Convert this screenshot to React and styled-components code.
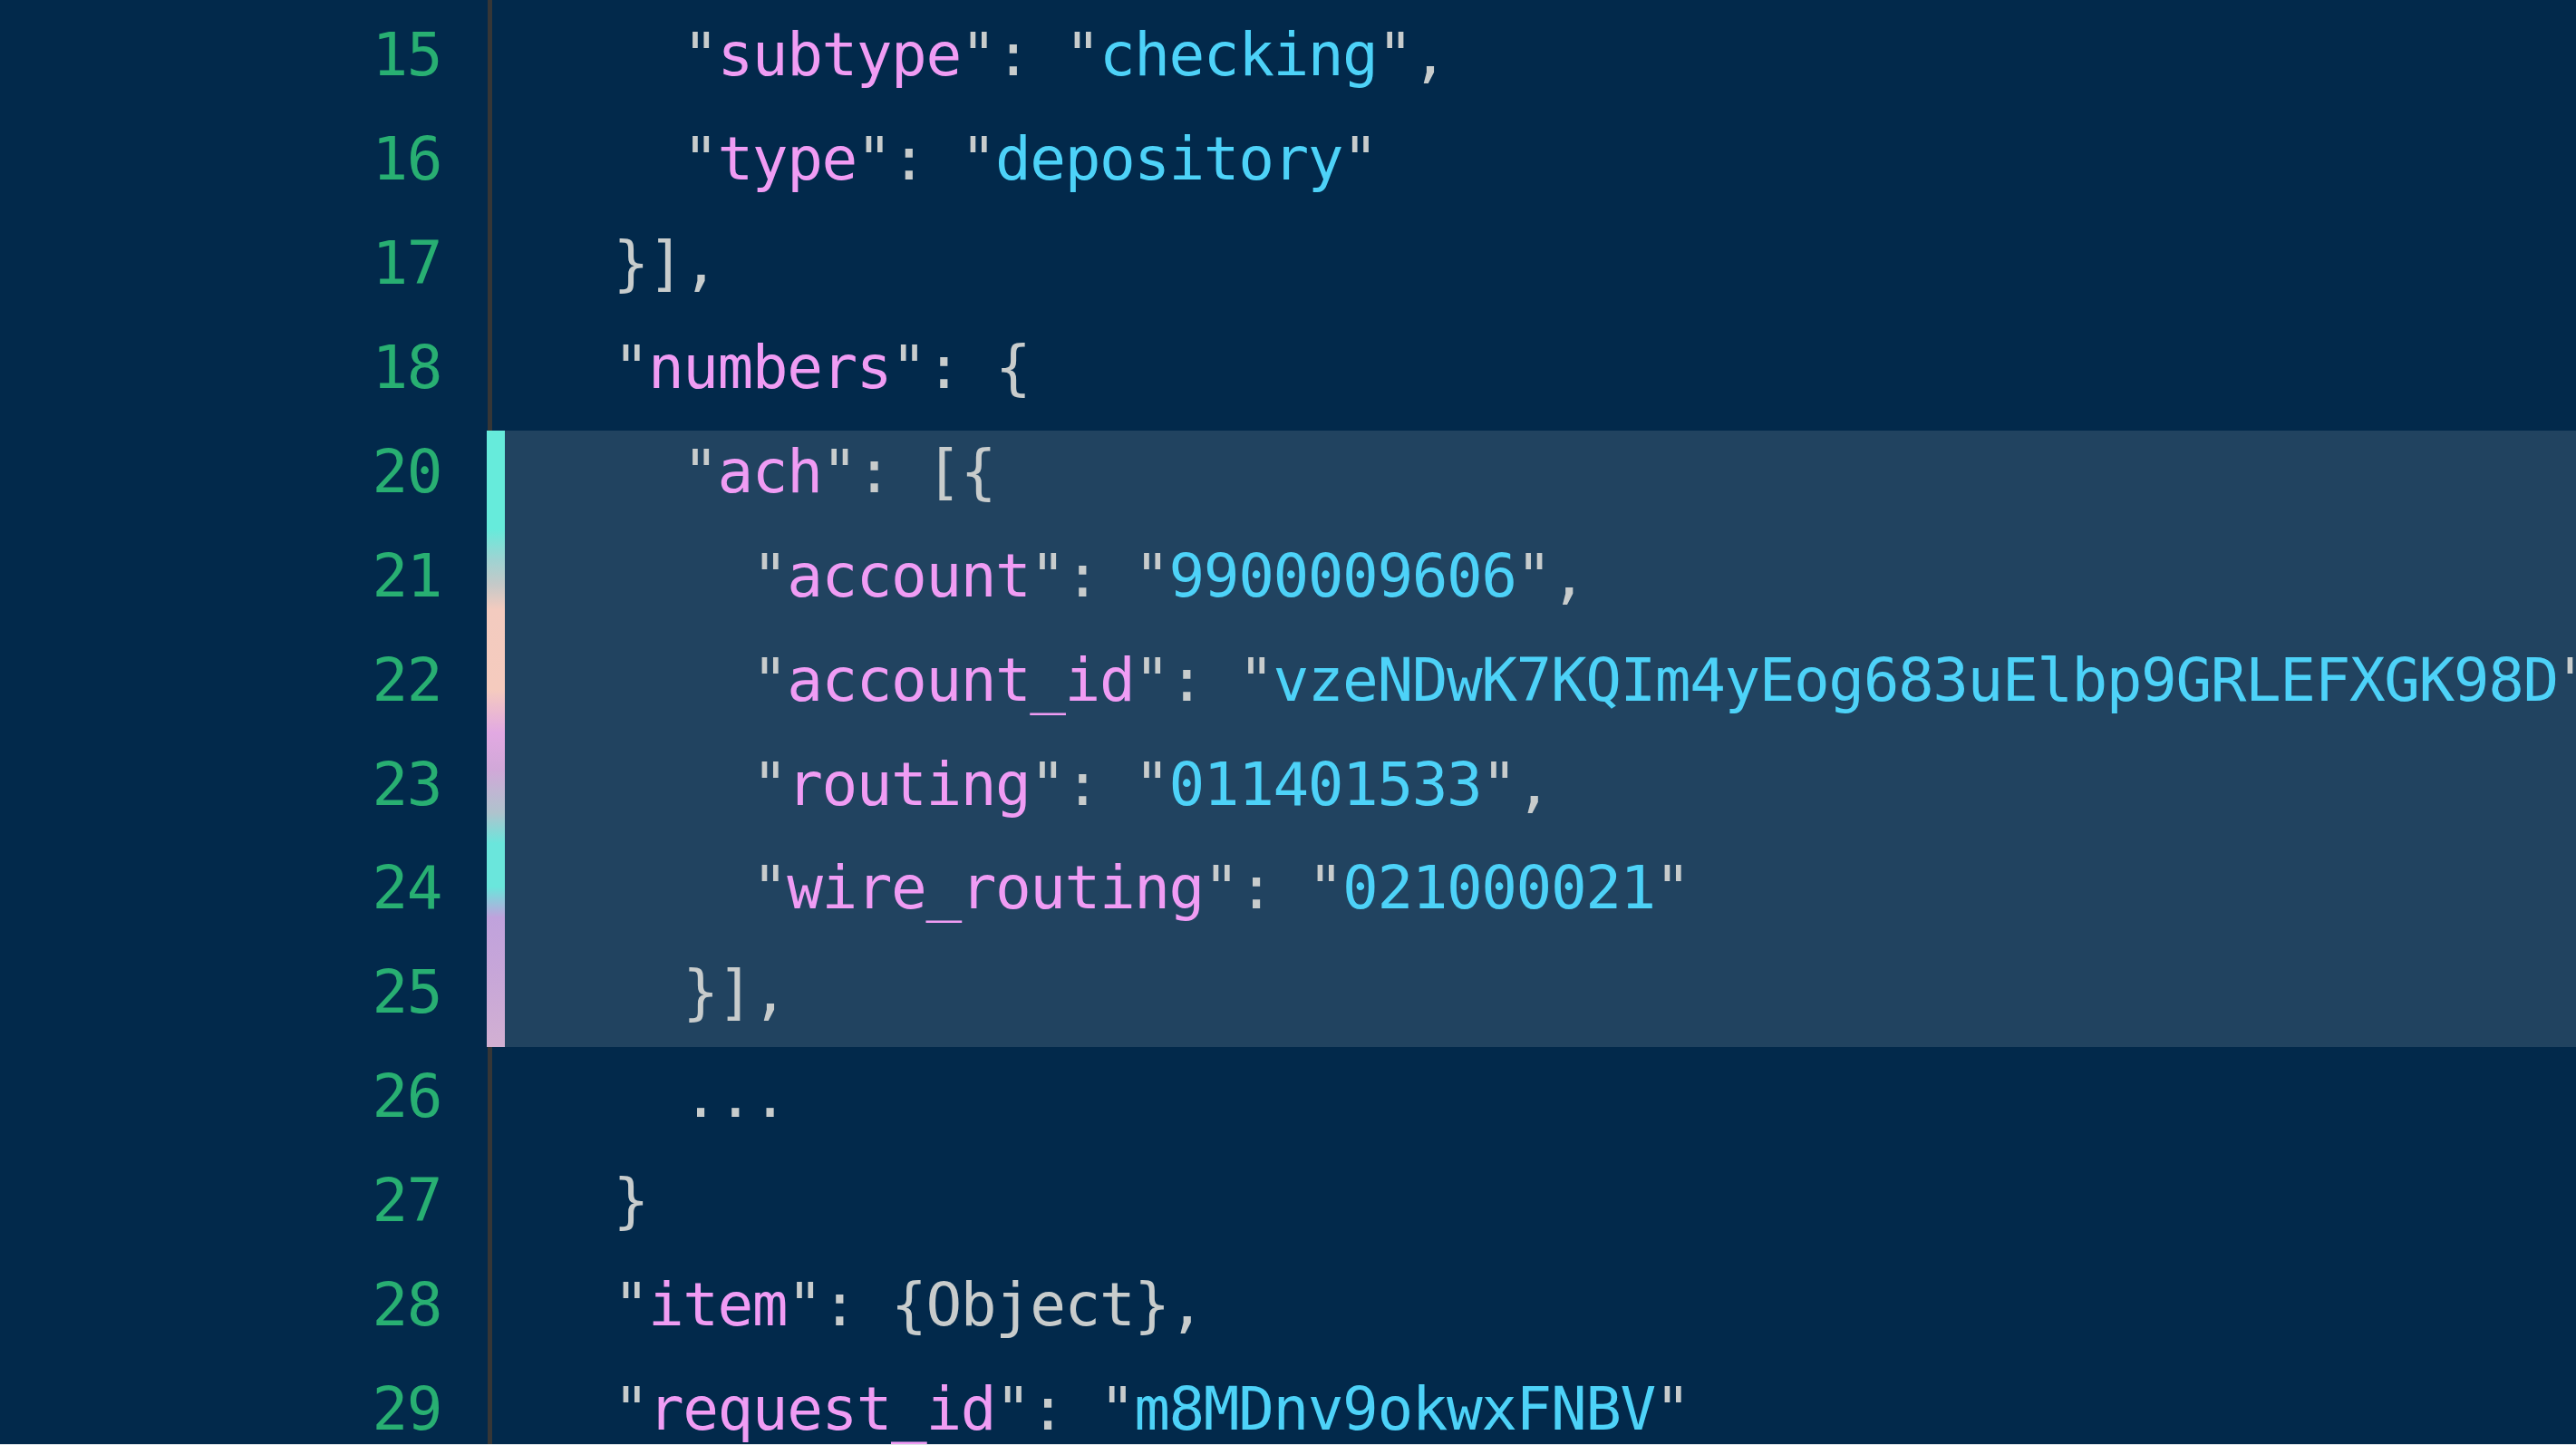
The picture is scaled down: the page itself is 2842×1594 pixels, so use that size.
import React from 'react';
import styled, { createGlobalStyle, css } from 'styled-components';

const GlobalStyle = createGlobalStyle`
  html, body {
    margin: 0;
    padding: 0;
    height: 100%;
    overflow: hidden;
    background: #dfe5e8;
  }
  #root { height: 100%; }
`;

const Editor = styled.div`
  height: calc(100vh - 1px);
  overflow: hidden;
  box-sizing: border-box;
  padding-top: 4.3px;
  background:
    linear-gradient(90deg, transparent 538px, #363636 538px, #363636 543px, transparent 543px),
    #02294b;
  font-family: "DejaVu Sans Mono", "Liberation Mono", monospace;
  font-size: 66px;
  letter-spacing: -1.43px;
`;

const Section = styled.div`
  position: relative;
  z-index: 0;
  ${(p) =>
    p.$marked &&
    css`
      &::before {
        content: '';
        position: absolute;
        z-index: -1;
        top: 11px;
        bottom: -2px;
        left: 537px;
        right: 0;
        background:
          linear-gradient(
              to bottom,
              #66ebdb 0%,
              #66ebdb 16%,
              #9fd3d2 21%,
              #c5c9c8 25%,
              #f3cbbf 29%,
              #f5cbbe 42%,
              #e2a9e2 49%,
              #d1a8d8 55%,
              #afc3cd 62%,
              #6ae6dc 67%,
              #6ae6dc 74%,
              #c0a2dc 79%,
              #c7a6d8 88%,
              #d2b0d2 100%
            )
            left top / 20px 100% no-repeat,
          #214360;
      }
    `}
`;

const Row = styled.div`
  display: grid;
  grid-template-columns: 538px minmax(0, 1fr);
  height: 114.9px;
  line-height: 114.9px;
  white-space: pre;
`;

const LineNo = styled.span`
  text-align: right;
  padding-right: 51px;
  color: #28af72;
`;

const Code = styled.code`
  font: inherit;
  padding-left: 62px;
  color: #c8cccc;
  min-width: 0;
`;

const Key = styled.span`
  color: #f09cf4;
`;

const Str = styled.span`
  color: #4dd2f8;
`;

const p = (t) => ({ t: 'p', v: t });
const key = (name) => [p('"'), { t: 'k', v: name }, p('"')];
const str = (val) => [p('"'), { t: 's', v: val }, p('"')];

const sections = [
  {
    marked: false,
    lines: [
      [15, [p('    '), ...key('subtype'), p(': '), ...str('checking'), p(',')]],
      [16, [p('    '), ...key('type'), p(': '), ...str('depository')]],
      [17, [p('  }],')]],
      [18, [p('  '), ...key('numbers'), p(': {')]],
    ],
  },
  {
    marked: true,
    lines: [
      [20, [p('    '), ...key('ach'), p(': [{')]],
      [21, [p('      '), ...key('account'), p(': '), ...str('9900009606'), p(',')]],
      [22, [p('      '), ...key('account_id'), p(': '), ...str('vzeNDwK7KQIm4yEog683uElbp9GRLEFXGK98D'), p(',')]],
      [23, [p('      '), ...key('routing'), p(': '), ...str('011401533'), p(',')]],
      [24, [p('      '), ...key('wire_routing'), p(': '), ...str('021000021')]],
      [25, [p('    }],')]],
    ],
  },
  {
    marked: false,
    lines: [
      [26, [p('    ...')]],
      [27, [p('  }')]],
      [28, [p('  '), ...key('item'), p(': {Object},')]],
      [29, [p('  '), ...key('request_id'), p(': '), ...str('m8MDnv9okwxFNBV')]],
    ],
  },
];

function Token({ tok }) {
  if (tok.t === 'k') return <Key>{tok.v}</Key>;
  if (tok.t === 's') return <Str>{tok.v}</Str>;
  return tok.v;
}

export default function App() {
  return (
    <>
      <GlobalStyle />
      <Editor>
        {sections.map((sec, si) => (
          <Section key={si} $marked={sec.marked}>
            {sec.lines.map(([n, toks]) => (
              <Row key={n}>
                <LineNo>{n}</LineNo>
                <Code>
                  {toks.map((tok, i) => (
                    <Token key={i} tok={tok} />
                  ))}
                </Code>
              </Row>
            ))}
          </Section>
        ))}
      </Editor>
    </>
  );
}
